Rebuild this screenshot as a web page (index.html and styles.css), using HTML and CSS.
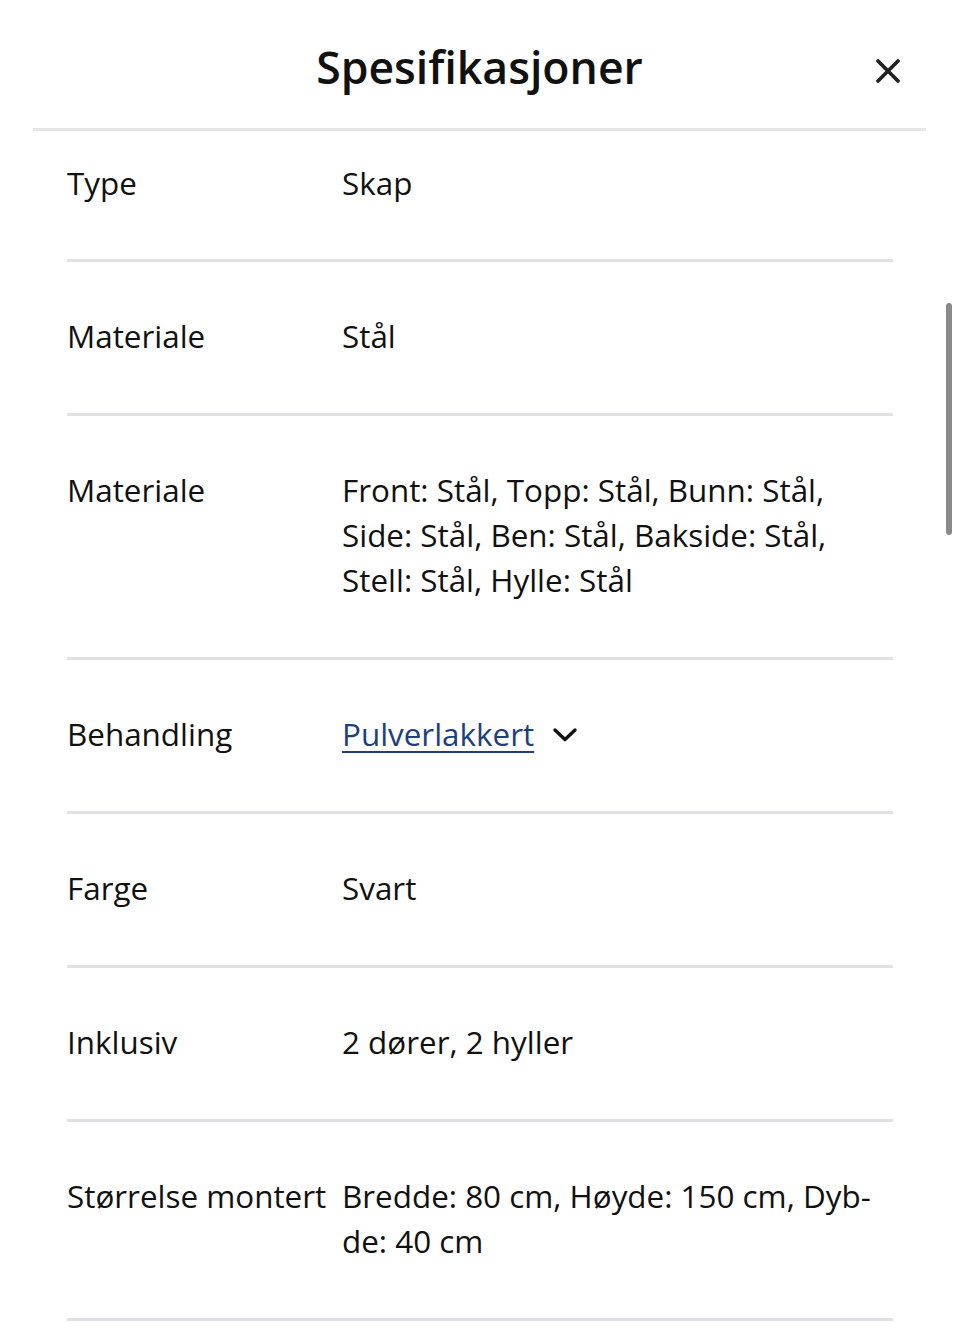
FILE: index.html
```html
<!DOCTYPE html>
<html lang="no">
<head>
<meta charset="utf-8">
<title>Spesifikasjoner</title>
<link rel="stylesheet" href="styles.css">
</head>
<body>
<div class="sheet">
  <header class="sheet-header">
    <h1 class="sheet-title">Spesifikasjoner</h1>
    <button class="close-btn" aria-label="Lukk">
      <svg width="26" height="26" viewBox="0 0 26 26"><path d="M3 3 L23 23 M23 3 L3 23" stroke="#222" stroke-width="3.8" stroke-linecap="round" fill="none"/></svg>
    </button>
  </header>
  <div class="specs">
    <div class="spec-row first">
      <div class="spec-label">Type</div>
      <div class="spec-value">Skap</div>
    </div>
    <div class="spec-row">
      <div class="spec-label">Materiale</div>
      <div class="spec-value">Stål</div>
    </div>
    <div class="spec-row">
      <div class="spec-label">Materiale</div>
      <div class="spec-value">Front: Stål, Topp: Stål, Bunn: Stål,<br>Side: Stål, Ben: Stål, Bakside: Stål,<br>Stell: Stål, Hylle: Stål</div>
    </div>
    <div class="spec-row">
      <div class="spec-label">Behandling</div>
      <div class="spec-value link-value">
        <a class="spec-link" href="#">Pulverlakkert</a>
        <svg class="chevron" width="26" height="16" viewBox="0 0 26 16"><path d="M3 3 L13 12.5 L23 3" stroke="#111" stroke-width="3.4" stroke-linecap="round" stroke-linejoin="round" fill="none"/></svg>
      </div>
    </div>
    <div class="spec-row">
      <div class="spec-label">Farge</div>
      <div class="spec-value">Svart</div>
    </div>
    <div class="spec-row">
      <div class="spec-label">Inklusiv</div>
      <div class="spec-value">2 dører, 2 hyller</div>
    </div>
    <div class="spec-row">
      <div class="spec-label">Størrelse montert</div>
      <div class="spec-value">Bredde: 80 cm, Høyde: 150 cm, Dyb-<br>de: 40 cm</div>
    </div>
  </div>
  <div class="scrollbar"></div>
</div>
</body>
</html>
```

FILE: styles.css
```css
* { box-sizing: border-box; }
html, body {
  margin: 0;
  padding: 0;
  background: #fff;
}
body {
  font-family: "Open Sans", "Noto Sans", sans-serif;
  color: #111;
  width: 960px;
  height: 1332px;
  overflow: hidden;
}
.sheet {
  position: relative;
  width: 960px;
  height: 1332px;
}
.sheet-header {
  position: relative;
  margin: 0 34px 0 33px;
  height: 131px;
  border-bottom: 3px solid #e6e6e8;
  display: flex;
  align-items: center;
  justify-content: center;
}
.sheet-title {
  margin: 4px 0 0 0;
  font-size: 44.6px;
  font-weight: 600;
  color: #111;
}
.close-btn {
  position: absolute;
  right: 25px;
  top: 58px;
  width: 26px;
  height: 26px;
  padding: 0;
  border: 0;
  background: none;
  display: flex;
}
.specs {
  padding: 0 67px;
}
.spec-row {
  display: grid;
  grid-template-columns: 275px 1fr;
  padding: 51px 0 55px;
  border-bottom: 3px solid #dfe1e7;
  font-size: 31.4px;
  line-height: 45px;
}
.spec-row.first {
  padding-top: 29px;
  padding-bottom: 54px;
}
.spec-label {
  white-space: nowrap;
}
.link-value {
  display: flex;
  align-items: center;
  gap: 18px;
}
.spec-link {
  color: #1c3f7f;
  text-decoration: underline;
  text-decoration-thickness: 2px;
  text-underline-offset: 5px;
}
.chevron {
  margin-top: 2px;
}
.scrollbar {
  position: absolute;
  left: 946px;
  top: 303px;
  width: 6px;
  height: 232px;
  border-radius: 3px;
  background: #8a8a8a;
}
```
